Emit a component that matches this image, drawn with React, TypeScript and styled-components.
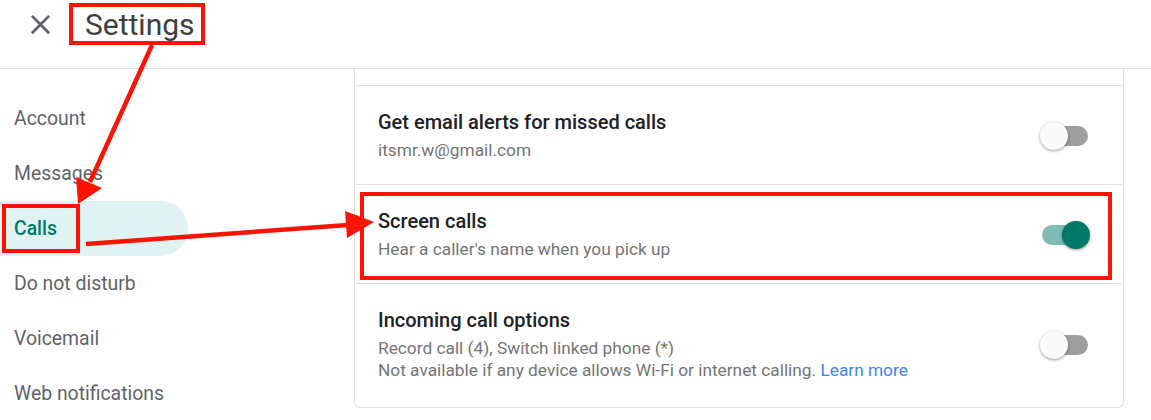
import React from "react";
import styled, { createGlobalStyle } from "styled-components";

const GlobalStyle = createGlobalStyle`
  body {
    margin: 0;
    background: #ffffff;
    font-family: Roboto, "Noto Sans", "Liberation Sans", sans-serif;
  }
`;

const navItems = [
  "Account",
  "Messages",
  "Calls",
  "Do not disturb",
  "Voicemail",
  "Web notifications",
];

export default function App() {
  return (
    <Page>
      <GlobalStyle />
      <Header>
        <CloseButton aria-label="Close">
          <svg width="33" height="33" viewBox="0 0 24 24">
            <path
              fill="#5f6368"
              d="M19 6.41L17.59 5 12 10.59 6.41 5 5 6.41 10.59 12 5 17.59 6.41 19 12 13.41 17.59 19 19 17.59 13.41 12z"
            />
          </svg>
        </CloseButton>
        <Title>Settings</Title>
      </Header>

      <Body>
        <Sidebar>
          {navItems.map((item) => (
            <NavItem key={item} active={item === "Calls"}>
              {item}
            </NavItem>
          ))}
        </Sidebar>

        <Main>
          <Card>
            <ClippedRow />
            <Row>
              <RowText>
                <RowTitle>Get email alerts for missed calls</RowTitle>
                <RowSub>itsmr.w@gmail.com</RowSub>
              </RowText>
              <Switch on={false} />
            </Row>
            <Row>
              <RowText>
                <RowTitle>Screen calls</RowTitle>
                <RowSub>Hear a caller's name when you pick up</RowSub>
              </RowText>
              <Switch on />
            </Row>
            <Row last>
              <RowText>
                <RowTitle>Incoming call options</RowTitle>
                <RowSub>
                  Record call (4), Switch linked phone (*)
                  <br />
                  Not available if any device allows Wi-Fi or internet calling.{" "}
                  <Link>Learn more</Link>
                </RowSub>
              </RowText>
              <Switch on={false} />
            </Row>
          </Card>
        </Main>
      </Body>

      {/* red annotations drawn on top of the screenshot */}
      <Annotations width="1151" height="420" viewBox="0 0 1151 420">
        <g fill="none" stroke="#fb1405" strokeWidth="4">
          <rect x="71" y="5" width="132" height="38" />
          <rect x="4" y="206" width="74" height="45" />
          <rect x="362" y="194" width="748" height="84" />
        </g>
        <g stroke="#fb1405" strokeWidth="4.5" strokeLinecap="butt">
          <line x1="152" y1="45" x2="90" y2="182" />
          <line x1="86" y1="244" x2="348" y2="225" />
        </g>
        <g fill="#fb1405">
          <polygon points="78,204 76,177 102,188" />
          <polygon points="374,222 345,211 347,238" />
        </g>
      </Annotations>
    </Page>
  );
}

const Switch: React.FC<{ on: boolean }> = ({ on }) => (
  <SwitchRoot>
    <Track on={on} />
    <Thumb on={on} />
  </SwitchRoot>
);

const Page = styled.div`
  position: relative;
  width: 1151px;
  height: 420px;
  overflow: hidden;
`;

const Header = styled.header`
  height: 60px;
  border-bottom: 1px solid #e0e0e0;
  display: flex;
  align-items: flex-start;
  padding: 8px 0 0 24px;
`;

const CloseButton = styled.div`
  width: 33px;
  height: 33px;
  display: flex;
`;

const Title = styled.h1`
  margin: 0 0 0 28px;
  font-size: 30px;
  line-height: 33px;
  font-weight: 400;
  color: #3c4043;
`;

const Body = styled.div`
  display: flex;
  height: 351px;
`;

const Sidebar = styled.nav`
  width: 354px;
  flex-shrink: 0;
  padding-top: 22px;
`;

const NavItem = styled.div<{ active?: boolean }>`
  width: 188px;
  height: 55px;
  box-sizing: border-box;
  padding-left: 14px;
  display: flex;
  align-items: center;
  border-radius: 0 28px 28px 0;
  font-size: 19.4px;
  font-weight: ${(p) => (p.active ? 500 : 400)};
  color: ${(p) => (p.active ? "#00796b" : "#5f6368")};
  background: ${(p) => (p.active ? "#e0f2f1" : "transparent")};
`;

const Main = styled.main`
  flex: 1;
  padding-right: 27px;
`;

const Card = styled.section`
  border: 1px solid #e0e0e0;
  border-top: none;
  border-radius: 0 0 6px 6px;
`;

const ClippedRow = styled.div`
  height: 16px;
  margin: 0 1px;
  border-bottom: 1px solid #e0e0e0;
`;

const Row = styled.div<{ last?: boolean }>`
  display: flex;
  align-items: center;
  margin: 0 1px;
  padding: ${(p) => (p.last ? "24px 32px 26px 22px" : "24px 32px 23px 22px")};
  border-bottom: ${(p) => (p.last ? "none" : "1px solid #e0e0e0")};
`;

const RowText = styled.div`
  flex: 1;
`;

const RowTitle = styled.div`
  font-size: 20px;
  line-height: 24px;
  font-weight: 500;
  color: #202124;
`;

const RowSub = styled.div`
  margin-top: 5px;
  font-size: 17.3px;
  line-height: 22px;
  color: #757575;
`;

const Link = styled.span`
  color: #4285f4;
`;

const SwitchRoot = styled.div`
  position: relative;
  width: 50px;
  height: 28px;
  flex-shrink: 0;
`;

const Track = styled.div<{ on: boolean }>`
  position: absolute;
  left: 2px;
  right: 2px;
  top: 4px;
  height: 20px;
  border-radius: 10px;
  background: ${(p) => (p.on ? "#7fbcb5" : "#9e9e9e")};
`;

const Thumb = styled.div<{ on: boolean }>`
  position: absolute;
  top: 0;
  left: ${(p) => (p.on ? "22px" : "0")};
  width: 28px;
  height: 28px;
  border-radius: 50%;
  background: ${(p) => (p.on ? "#00796b" : "#fafafa")};
  box-shadow: 0 1px 3px rgba(0, 0, 0, 0.4);
`;

const Annotations = styled.svg`
  position: absolute;
  left: 0;
  top: 0;
  pointer-events: none;
`;
